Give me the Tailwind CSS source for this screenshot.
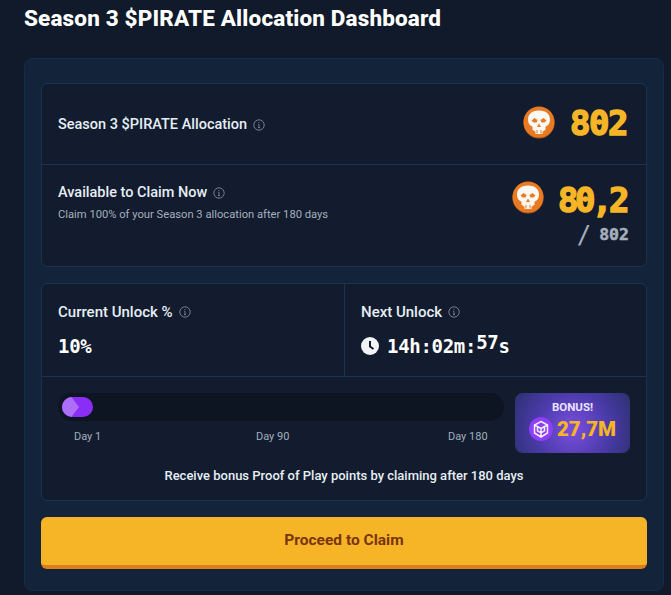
<!doctype html>
<html><head><meta charset="utf-8"><script src="https://cdn.jsdelivr.net/npm/@tailwindcss/browser@4"></script></head>
<body class="m-0 bg-[#101a2a] overflow-hidden font-['Roboto',sans-serif]">
<div class="w-[671px] h-[595px] overflow-hidden pl-6 pr-[7px]">
<h1 class="h-[58px] pb-[21px] flex items-center text-[22.5px] font-extrabold text-white tracking-[0.15px]">Season 3 $PIRATE Allocation Dashboard</h1>
<div class="w-[640px] h-[533px] rounded-lg border border-[#15294a] bg-[#12233a] px-4 pt-6 flex flex-col">
  <div class="h-[184px] rounded-md border border-[#1b3352] bg-[#121c2e] flex flex-col">
    <div class="h-[81px] border-b border-[#1b3352] pl-4 pr-[19px] flex items-center justify-between">
      <div class="flex items-center gap-[6px] mt-[2px] text-[14.5px] font-medium text-[#e6eef5]">Season 3 $PIRATE Allocation
        <svg class="w-3 h-3 text-[#8d97a6]" viewBox="0 0 12 12" fill="none" stroke="currentColor"><circle cx="6" cy="6" r="5.2" stroke-width=".8"/><path d="M6 5.4v3M5 8.6h2M5.2 5.3h.8" stroke-width=".8"/><circle cx="6" cy="3.5" r=".5" fill="currentColor" stroke="none"/></svg>
      </div>
      <div class="flex items-center gap-[15px] mb-[3px]">
        <svg class="w-8 h-[33px] mb-[1px]" viewBox="0 0 32 33"><circle cx="16" cy="17" r="15.5" fill="#a8541a"/><circle cx="16" cy="16" r="15.5" fill="#e87a22"/><path d="M16 4.500c-7.500 0-11 4-11 9 0 3.500 1.300 6 4.500 7.200v3l3 2v2.300h7v-2.300l3-2v-3c3.200-1.200 4.500-3.700 4.500-7.200 0-5-3.500-9-11-9z" fill="#fbf7f2"/><path d="M8.500 14.500l3-2.500 3 2-1 2.500h-3zM23.500 14.500l-3-2.500-3 2 1 2.500h3zM16 17.500l-2 3.500h4zM13.500 24h1v3.500h-1zM17.500 24h1v3.500h-1z" fill="#e87a22"/></svg>
        <span class="font-['DejaVu_Sans_Mono',monospace] font-bold text-[34px] leading-none text-[#f6b526] tracking-[-1.500px] [-webkit-text-stroke:1.500px_#f6b526]">802</span>
      </div>
    </div>
    <div class="flex-1 pl-4 pr-[17px] flex justify-between">
      <div class="pt-[19px]">
        <div class="flex items-center gap-[6px] text-[14.5px] font-medium leading-[18px] text-[#e6eef5]">Available to Claim Now
          <svg class="w-3 h-3 text-[#8d97a6]" viewBox="0 0 12 12" fill="none" stroke="currentColor"><circle cx="6" cy="6" r="5.2" stroke-width=".8"/><path d="M6 5.4v3M5 8.6h2M5.2 5.300h.8" stroke-width=".8"/><circle cx="6" cy="3.500" r=".5" fill="currentColor" stroke="none"/></svg>
        </div>
        <div class="mt-[6px] text-[11.200px] text-[#a3afbc] leading-[14px]">Claim 100% of your Season 3 allocation after 180 days</div>
      </div>
      <div class="pt-[15px] flex flex-col items-end">
        <div class="flex items-center gap-[14px] h-[34px]">
          <svg class="w-8 h-[33px]" viewBox="0 0 32 33"><circle cx="16" cy="17" r="15.5" fill="#a8541a"/><circle cx="16" cy="16" r="15.5" fill="#e87a22"/><path d="M16 4.500c-7.500 0-11 4-11 9 0 3.500 1.300 6 4.500 7.200v3l3 2v2.300h7v-2.300l3-2v-3c3.200-1.200 4.500-3.700 4.500-7.200 0-5-3.500-9-11-9z" fill="#fbf7f2"/><path d="M8.500 14.500l3-2.500 3 2-1 2.500h-3zM23.500 14.500l-3-2.500-3 2 1 2.500h3zM16 17.500l-2 3.500h4zM13.500 24h1v3.500h-1zM17.500 24h1v3.500h-1z" fill="#e87a22"/></svg>
          <span class="mt-[5px] mr-[3px] font-['DejaVu_Sans_Mono',monospace] font-bold text-[34px] leading-none text-[#f6b526] tracking-[-3.500px] [-webkit-text-stroke:1.500px_#f6b526]">80,2</span>
        </div>
        <div class="mt-[9px] flex items-center gap-[8px] font-['DejaVu_Sans_Mono',monospace] font-bold text-[#a6aebb] leading-none"><span class="text-[24px] font-normal">/</span><span class="text-[16.500px] [-webkit-text-stroke:0.5px_#a6aebb]">802</span></div>
      </div>
    </div>
  </div>
  <div class="mt-4 h-[218px] rounded-md border border-[#1b3352] bg-[#121c2e] flex flex-col">
    <div class="h-[93px] border-b border-[#1b3352] flex">
      <div class="w-[303px] border-r border-[#1b3352] pl-4 pt-[18px]">
        <div class="flex items-center gap-[6px] text-[15px] font-medium leading-[20px] text-[#e6eef5]">Current Unlock %
          <svg class="w-3 h-3 text-[#8d97a6]" viewBox="0 0 12 12" fill="none" stroke="currentColor"><circle cx="6" cy="6" r="5.200" stroke-width=".8"/><path d="M6 5.400v3M5 8.600h2M5.200 5.300h.8" stroke-width=".8"/><circle cx="6" cy="3.500" r=".5" fill="currentColor" stroke="none"/></svg>
        </div>
        <div class="mt-[14px] font-['DejaVu_Sans_Mono',monospace] font-bold text-[19px] leading-[20px] text-white tracking-[-0.3px]">10%</div>
      </div>
      <div class="flex-1 pl-4 pt-[18px]">
        <div class="flex items-center gap-[6px] text-[15px] font-medium leading-[20px] text-[#e6eef5]">Next Unlock
          <svg class="w-3 h-3 text-[#8d97a6]" viewBox="0 0 12 12" fill="none" stroke="currentColor"><circle cx="6" cy="6" r="5.200" stroke-width=".8"/><path d="M6 5.400v3M5 8.600h2M5.200 5.300h.8" stroke-width=".8"/><circle cx="6" cy="3.500" r=".5" fill="currentColor" stroke="none"/></svg>
        </div>
        <div class="mt-[14px] flex items-center gap-[8px] font-['DejaVu_Sans_Mono',monospace] font-bold text-[19px] leading-[20px] text-white tracking-[-0.3px]">
          <svg class="w-[18px] h-[18px]" viewBox="0 0 18 18"><circle cx="9" cy="9" r="9" fill="#f1f3f5"/><path d="M9 4v5.500l3.500 2.500" fill="none" stroke="#121c2e" stroke-width="2"/></svg>
          <span>14h:02m:<span class="relative top-[-4px]">57</span>s</span>
        </div>
      </div>
    </div>
    <div class="flex-1 pl-4 pr-[16px] pt-4 relative">
      <div class="flex justify-between">
        <div class="w-[446px]">
          <div class="h-7 rounded-full bg-[#0e1522] px-1 flex items-center">
            <div class="relative w-[31px] h-5 rounded-full bg-[#8a2df5] overflow-hidden">
              <div class="w-[17px] h-5 bg-[#ad6ff7] [clip-path:polygon(0_0,55%_0,100%_50%,55%_100%,0_100%)]"></div>
            </div>
          </div>
          <div class="relative mt-[8px] h-[16px] text-[11px] leading-[16px] text-[#a3afbc]">
            <span class="absolute left-4">Day 1</span>
            <span class="absolute left-[198px]">Day 90</span>
            <span class="absolute left-[390px]">Day 180</span>
          </div>
        </div>
        <div class="w-[115px] h-[60px] rounded-lg bg-[radial-gradient(circle_at_50%_60%,#7a4fe0_0%,#4a3aa8_55%,#2b3170_100%)] flex flex-col items-center justify-start pt-[7px]">
          <div class="text-[11.500px] font-bold leading-[14px] text-[#e8e4ff]">BONUS!</div>
          <div class="flex items-center gap-[4px] mt-[2px]">
            <svg class="w-6 h-6" viewBox="0 0 24 24"><circle cx="12" cy="12" r="12" fill="#8c3ff5"/><path d="M12 4.500l6.500 3.500v8L12 20l-6.500-4V8zM5.500 8l6.500 3.500L18.500 8M12 11.500V20M8.500 9.800v4l3.500 2 3.500-2v-4" fill="none" stroke="#f4eefe" stroke-width="1.500"/></svg>
            <span class="text-[20.500px] font-black leading-[26px] text-[#f6b526]">27,7M</span>
          </div>
        </div>
      </div>
      <div class="absolute left-0 right-0 top-[91px] text-center text-[13px] font-medium leading-4 text-[#e6eef5]">Receive bonus Proof of Play points by claiming after 180 days</div>
    </div>
  </div>
  <button class="mt-4 h-[52px] w-full rounded-md bg-[#f6b526] border-b-4 border-[#dd7d1c] text-[15.500px] font-bold text-[#7a3410]">Proceed to Claim</button>
</div>
</div>
</body></html>
